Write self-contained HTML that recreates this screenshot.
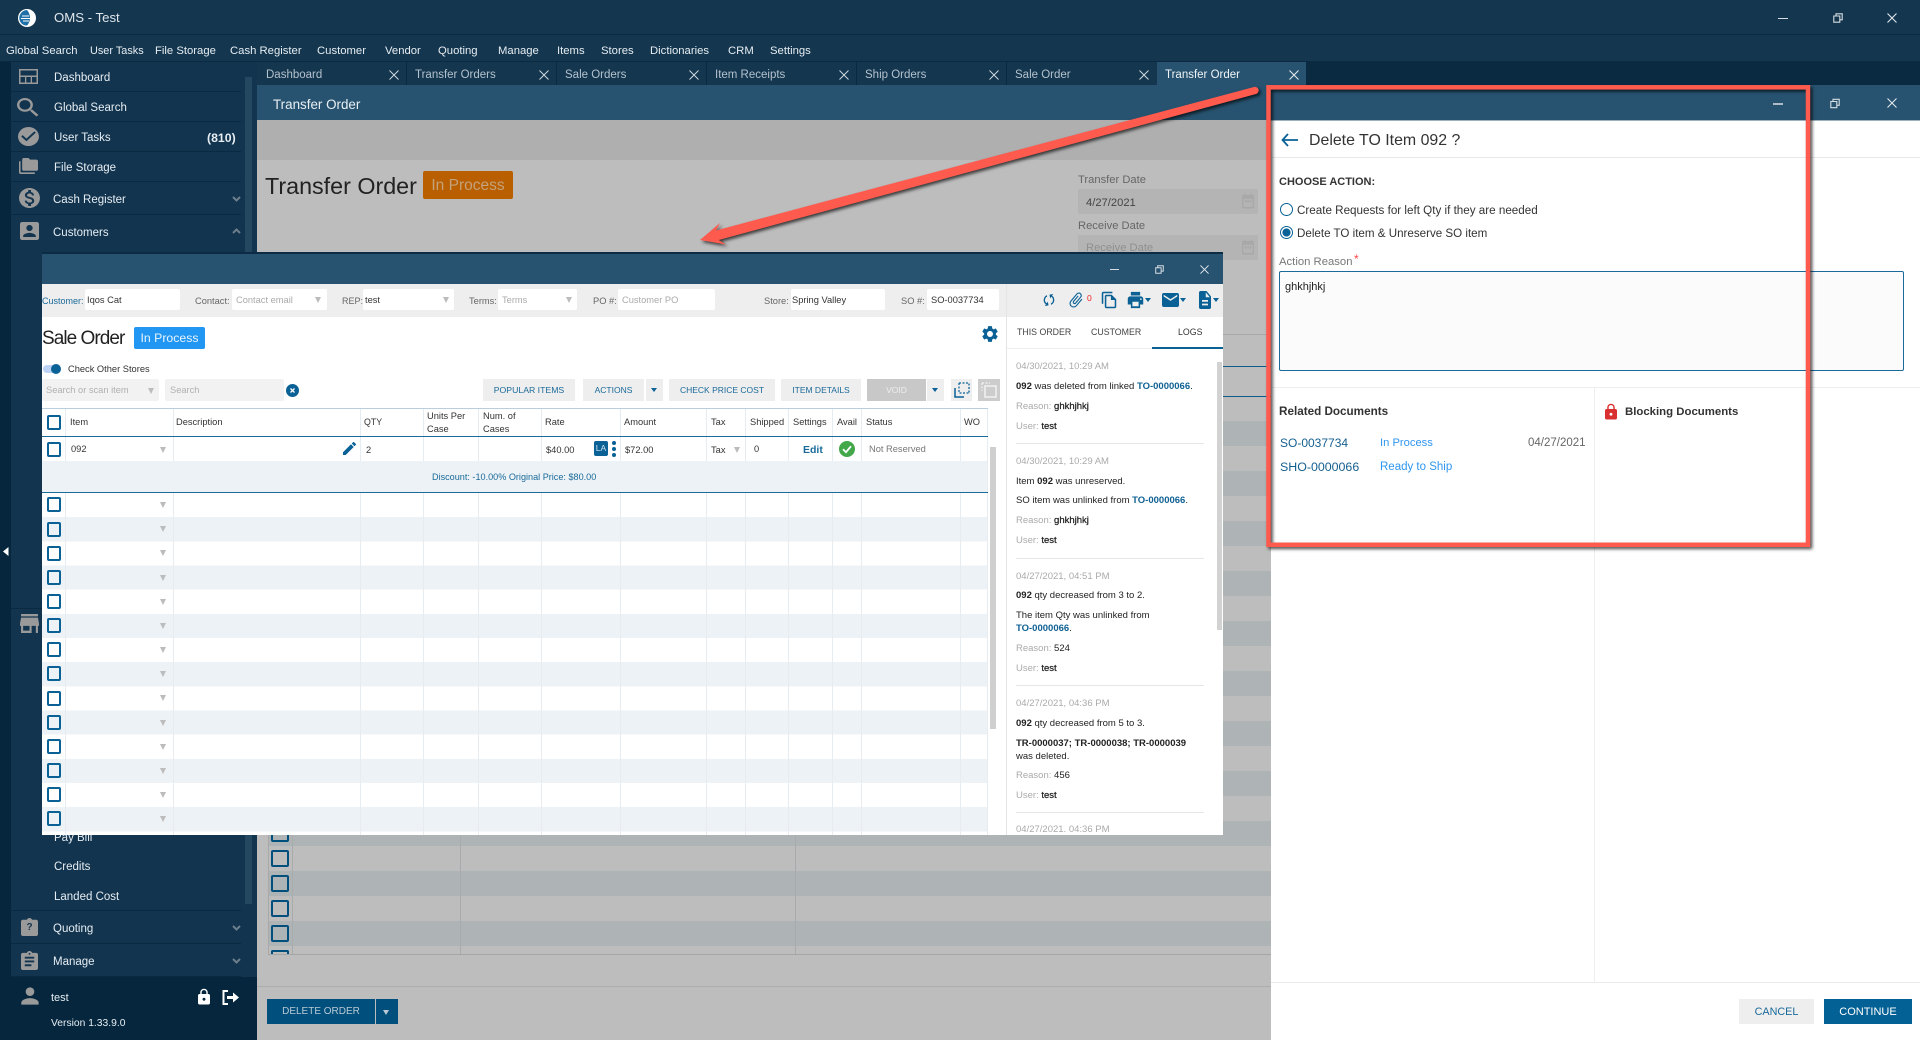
<!DOCTYPE html>
<html><head><meta charset="utf-8"><title>OMS - Test</title>
<style>
html,body{margin:0;padding:0;background:#bdbdbd}
#app{position:relative;width:1920px;height:1040px;overflow:hidden;font-family:"Liberation Sans",sans-serif;font-size:9.3px;color:#333}
.a,.b,.t,.s,.f{position:absolute;white-space:nowrap}
.t{line-height:14px}
.b{display:block}
.m{font-size:11.3px;color:#e6edf2;top:45px}
.s{font-size:11.5px;color:#e6edf2;line-height:14px;left:54px;margin-top:1px}
.sep{position:absolute;left:11px;width:230px;height:1px;background:#0a2a42}
.tab{position:absolute;top:68px;font-size:11.5px;color:#b4c2cd;line-height:14px;white-space:nowrap}
.ts{position:absolute;top:62px;height:23px;width:1px;background:#0a2a42}
.lb{position:absolute;top:294px;font-size:9.3px;color:#666;line-height:14px;white-space:nowrap}
.in{position:absolute;top:289px;height:21px;background:#fff;border-radius:2px;font-size:9.3px;line-height:23px;padding-left:2px;box-sizing:border-box;color:#333;white-space:nowrap}
.ph{color:#aaa;padding-left:4px}
.ar{position:absolute;width:0;height:0;border-left:3.5px solid transparent;border-right:3.5px solid transparent;border-top:6px solid #bcbcbc}
.bt{position:absolute;top:379px;height:22px;background:#eee;color:#1a6a9a;font-size:8.5px;line-height:22px;text-align:center;white-space:nowrap}
.cs{position:absolute;top:408px;width:1px;height:427px;background:#e6ecf0}
.h{position:absolute;font-size:9.3px;color:#333;line-height:12.5px;white-space:nowrap}
.c{position:absolute;left:47px;width:14px;height:15px;box-sizing:border-box;border:2px solid #0a6196;border-radius:2px}
.bc{position:absolute;left:271px;width:17.5px;height:17px;box-sizing:border-box;border:2.5px solid #014f7d;border-radius:2px}
.l{position:absolute;left:1016px;font-size:9.5px;line-height:13px;color:#222;white-space:nowrap}
.d{color:#aaa}
.k{color:#0f6194;font-weight:bold}
.v{-webkit-text-stroke:.25px #222}
.ls{position:absolute;left:1016px;width:188px;height:1px;background:#e6e6e6}
svg{position:absolute;display:block}
.g{fill:#9a9a9a}
.n{fill:#0a6196}
</style></head><body>
<div id="app">
<svg width="0" height="0" style="left:0;top:0"><defs>
<symbol id="x" viewBox="0 0 10 10"><path d="M.5.5l9 9M9.5.5l-9 9" stroke="#cfd8de" stroke-width="1" fill="none"/></symbol>
<symbol id="ex" viewBox="0 0 10 10"><path d="M.5.5l9 9M9.5.5l-9 9" stroke="#e2e8ec" stroke-width="1.1" fill="none"/></symbol>
<symbol id="rs" viewBox="0 0 10 10"><path d="M.8 3h6v6.2h-6zM3 3V.8h6.2v6H6.8" stroke="#d5dde2" stroke-width="1.1" fill="none"/></symbol>
<symbol id="assign" viewBox="0 0 24 24"><path d="M19 3h-4.18C14.4 1.84 13.3 1 12 1c-1.3 0-2.4.84-2.82 2H5c-1.1 0-2 .9-2 2v14c0 1.1.9 2 2 2h14c1.1 0 2-.9 2-2V5c0-1.1-.9-2-2-2zm-7 0c.55 0 1 .45 1 1s-.45 1-1 1-1-.45-1-1 .45-1 1-1zm2 14H7v-2h7v2zm3-4H7v-2h10v2zm0-4H7V7h10v2z"/></symbol>
<symbol id="cal" viewBox="0 0 24 24"><path d="M19 4h-1V2h-2v2H8V2H6v2H5a2 2 0 0 0-2 2v14a2 2 0 0 0 2 2h14a2 2 0 0 0 2-2V6a2 2 0 0 0-2-2zm0 16H5V9h14zM7 11h3v3H7zm4 0h3v3h-3zm4 0h2v3h-2z"/></symbol>
</defs></svg>

<!-- top bars -->
<div class="a" style="left:0;top:0;width:1920px;height:62px;background:#14364f"></div>
<div class="a" style="left:0;top:34px;width:1920px;height:1px;background:#0b2a42"></div>
<div class="a" style="left:0;top:61px;width:1920px;height:1px;background:#0b2a42"></div>
<svg style="left:18px;top:9px" width="18" height="18" viewBox="0 0 18 18"><circle cx="9" cy="9" r="9" fill="#fff"/><path d="M9 1a8 8 0 0 0-5 14c1 .8 3 1.6 5 1.5 2-2 3-5 3-7.500S11 3 9 1z" fill="#1d6fa8"/><path d="M4 7h7M3 9.500h9M5 12h6" stroke="#fff" stroke-width="1"/></svg>
<div class="t" style="left:54px;top:11px;font-size:13.2px;color:#dfe6eb">OMS - Test</div>
<div class="a" style="left:1778px;top:18px;width:10px;height:1px;background:#d5dde2"></div>
<svg style="left:1833px;top:13px" width="10" height="10"><use href="#rs"/></svg>
<svg style="left:1887px;top:13px" width="10" height="10"><use href="#ex"/></svg>
<div class="a m" style="left:6px">Global Search</div>
<div class="a m" style="left:90px;font-size:10.9px">User Tasks</div>
<div class="a m" style="left:155px">File Storage</div>
<div class="a m" style="left:230px">Cash Register</div>
<div class="a m" style="left:317px">Customer</div>
<div class="a m" style="left:385px">Vendor</div>
<div class="a m" style="left:438px">Quoting</div>
<div class="a m" style="left:498px">Manage</div>
<div class="a m" style="left:557px">Items</div>
<div class="a m" style="left:601px">Stores</div>
<div class="a m" style="left:650px">Dictionaries</div>
<div class="a m" style="left:728px">CRM</div>
<div class="a m" style="left:770px">Settings</div>

<!-- tab row -->
<div class="a" style="left:257px;top:62px;width:1663px;height:24px;background:#0a2a42"></div>
<div class="a" style="left:257px;top:62px;width:900px;height:23px;background:#14364f"></div>
<div class="a" style="left:1157px;top:62px;width:149px;height:23px;background:#275370"></div>
<div class="tab" style="left:266px">Dashboard</div><svg style="left:389px;top:70px" width="10" height="10"><use href="#x"/></svg><div class="ts" style="left:406px"></div>
<div class="tab" style="left:415px">Transfer Orders</div><svg style="left:539px;top:70px" width="10" height="10"><use href="#x"/></svg><div class="ts" style="left:556px"></div>
<div class="tab" style="left:565px">Sale Orders</div><svg style="left:689px;top:70px" width="10" height="10"><use href="#x"/></svg><div class="ts" style="left:706px"></div>
<div class="tab" style="left:715px">Item Receipts</div><svg style="left:839px;top:70px" width="10" height="10"><use href="#x"/></svg><div class="ts" style="left:856px"></div>
<div class="tab" style="left:865px">Ship Orders</div><svg style="left:989px;top:70px" width="10" height="10"><use href="#x"/></svg><div class="ts" style="left:1006px"></div>
<div class="tab" style="left:1015px">Sale Order</div><svg style="left:1139px;top:70px" width="10" height="10"><use href="#x"/></svg>
<div class="tab" style="left:1165px;color:#f0f4f6">Transfer Order</div><svg style="left:1289px;top:70px" width="10" height="10"><use href="#ex"/></svg>

<!-- sidebar -->
<div class="a" style="left:0;top:62px;width:11px;height:978px;background:#06263d"></div>
<div class="a" style="left:11px;top:62px;width:246px;height:915px;background:#12344f"></div>
<div class="a" style="left:245px;top:77px;width:7px;height:827px;background:#24485f"></div>
<div class="sep" style="top:91px"></div><div class="sep" style="top:121px"></div><div class="sep" style="top:151px"></div><div class="sep" style="top:181px"></div><div class="sep" style="top:214px"></div><div class="sep" style="top:910px"></div><div class="sep" style="top:943px"></div><div class="sep" style="top:976px"></div><div class="sep" style="top:608px;width:31px"></div>
<div class="s" style="top:70px">Dashboard</div>
<div class="s" style="top:100px">Global Search</div>
<div class="s" style="top:130px">User Tasks</div>
<div class="s" style="top:160px">File Storage</div>
<div class="s" style="top:192px;left:53px">Cash Register</div>
<div class="s" style="top:225px;left:53px">Customers</div>
<div class="s" style="top:130px;left:207px;font-weight:bold;font-size:12.3px">(810)</div>
<div class="s" style="top:830px">Pay Bill</div>
<div class="s" style="top:859px">Credits</div>
<div class="s" style="top:889px">Landed Cost</div>
<div class="s" style="top:921px;left:53px">Quoting</div>
<div class="s" style="top:954px;left:53px">Manage</div>
<svg style="left:19px;top:69px" width="19" height="15" viewBox="0 0 19 15"><path class="g" fill-rule="evenodd" d="M0 0h19v15H0zM1.500 1.500v5h16v-5zM1.500 8v5.500h4.500V8zM7.300 8v5.500h4.400V8zM13 8v5.500h4.500V8z"/></svg>
<svg style="left:17px;top:98px" width="22" height="19" viewBox="3 3 18 18" preserveAspectRatio="none"><path class="g" d="M15.500 14h-.79l-.28-.27A6.470 6.470 0 0 0 16 9.500 6.500 6.500 0 1 0 9.500 16c1.610 0 3.090-.59 4.230-1.570l.27.28v.79l5 4.990L20.490 19l-4.990-5zm-6 0C7.010 14 5 11.990 5 9.500S7.010 5 9.500 5 14 7.010 14 9.500 11.990 14 9.500 14z"/></svg>
<svg style="left:17px;top:126px" width="23" height="21" viewBox="1 1 22 22" preserveAspectRatio="none"><path class="g" d="M12 2C6.480 2 2 6.480 2 12s4.480 10 10 10 10-4.480 10-10S17.520 2 12 2zm-2 15l-5-5 1.410-1.410L10 14.170l7.590-7.590L19 8l-9 9z"/></svg>
<svg style="left:19px;top:158px" width="19" height="16" viewBox="0 2 24 20" preserveAspectRatio="none"><path class="g" d="M2 6H0v5h.01L0 20c0 1.100.9 2 2 2h18v-2H2V6zm20-2h-8l-2-2H6c-1.100 0-1.990.9-1.990 2L4 16c0 1.100.9 2 2 2h16c1.100 0 2-.9 2-2V6c0-1.100-.9-2-2-2z"/></svg>
<svg style="left:18px;top:187px" width="23" height="22" viewBox="1 1 22 22" preserveAspectRatio="none"><path class="g" d="M12 2C6.480 2 2 6.480 2 12s4.480 10 10 10 10-4.480 10-10S17.520 2 12 2zm1.410 16.090V20h-2.670v-1.930c-1.710-.36-3.160-1.460-3.270-3.400h1.960c.1 1.050.82 1.870 2.650 1.870 1.960 0 2.400-.98 2.400-1.590 0-.83-.44-1.610-2.670-2.140-2.480-.6-4.180-1.620-4.180-3.670 0-1.720 1.390-2.840 3.110-3.210V4h2.670v1.950c1.860.45 2.790 1.860 2.850 3.390H14.300c-.05-1.110-.64-1.870-2.220-1.870-1.500 0-2.400.68-2.400 1.640 0 .84.65 1.390 2.670 1.910s4.180 1.390 4.180 3.910c-.01 1.830-1.380 2.830-3.120 3.160z"/></svg>
<svg style="left:20px;top:222px" width="19" height="18" viewBox="3 3 18 18" preserveAspectRatio="none"><path class="g" d="M3 5v14c0 1.100.89 2 2 2h14c1.100 0 2-.9 2-2V5c0-1.100-.9-2-2-2H5c-1.110 0-2 .9-2 2zm12 4c0 1.660-1.340 3-3 3s-3-1.340-3-3 1.340-3 3-3 3 1.340 3 3zm-9 8c0-2 4-3.100 6-3.100s6 1.100 6 3.100v1H6v-1z"/></svg>
<svg style="left:232px;top:196px" width="9" height="6"><path d="M1 1l3.500 3.500L8 1" stroke="#6d7f8c" stroke-width="2" fill="none"/></svg>
<svg style="left:232px;top:228px" width="9" height="6"><path d="M1 5l3.500-3.500L8 5" stroke="#6d7f8c" stroke-width="2" fill="none"/></svg>
<svg style="left:232px;top:925px" width="9" height="6"><path d="M1 1l3.500 3.500L8 1" stroke="#6d7f8c" stroke-width="2" fill="none"/></svg>
<svg style="left:232px;top:958px" width="9" height="6"><path d="M1 1l3.500 3.500L8 1" stroke="#6d7f8c" stroke-width="2" fill="none"/></svg>
<svg style="left:20px;top:614px" width="19" height="19" viewBox="3 4 18 16" preserveAspectRatio="none"><path class="g" d="M20 4H4v2h16V4zm1 10v-2l-1-5H4l-1 5v2h1v6h10v-6h4v6h2v-6h1zm-9 4H6v-4h6v4z"/></svg>
<svg style="left:21px;top:918px" width="17" height="18" viewBox="3 1 18 20" preserveAspectRatio="none"><path class="g" d="M19 3h-4.180C14.400 1.840 13.300 1 12 1c-1.300 0-2.400.84-2.820 2H5c-1.100 0-2 .9-2 2v14c0 1.100.9 2 2 2h14c1.100 0 2-.9 2-2V5c0-1.100-.9-2-2-2z"/></svg>
<div class="t" style="left:26.500px;top:921px;font-size:10px;font-weight:bold;color:#12344f">?</div>
<svg style="left:21px;top:951px;fill:#9a9a9a" width="17" height="19" viewBox="3 1 18 20" preserveAspectRatio="none"><use href="#assign" width="24" height="24"/></svg>
<svg style="left:3px;top:547px" width="6" height="9"><path d="M5.500 0v9L0 4.500z" fill="#fff"/></svg>

<!-- sidebar footer -->
<div class="a" style="left:0;top:977px;width:257px;height:63px;background:#06263d"></div>
<svg style="left:17px;top:983px" width="26" height="26" viewBox="0 0 24 24"><path class="g" d="M12 12c2.210 0 4-1.790 4-4s-1.790-4-4-4-4 1.790-4 4 1.790 4 4 4zm0 2c-2.670 0-8 1.340-8 4v2h16v-2c0-2.660-5.330-4-8-4z"/></svg>
<div class="t" style="left:51px;top:991px;font-size:11px;color:#e6edf2">test</div>
<div class="t" style="left:51px;top:1016px;font-size:10.300px;margin-top:1px;color:#e6edf2">Version 1.33.9.0</div>
<svg style="left:195px;top:988px" width="18" height="18" viewBox="0 0 24 24"><path fill="#fff" d="M18 8h-1V6c0-2.760-2.240-5-5-5S7 3.240 7 6v2H6c-1.100 0-2 .9-2 2v10c0 1.100.9 2 2 2h12c1.100 0 2-.9 2-2V10c0-1.100-.9-2-2-2zm-6 9c-1.100 0-2-.9-2-2s.9-2 2-2 2 .9 2 2-.9 2-2 2zm3.100-9H8.900V6c0-1.710 1.390-3.100 3.100-3.100 1.710 0 3.100 1.390 3.100 3.100v2z"/></svg>
<svg style="left:222px;top:990px" width="17" height="15" viewBox="0 0 17 15"><path d="M6 1H1.500v13H6" stroke="#fff" stroke-width="2" fill="none"/><path d="M5 6h6V2.500l6 5-6 5V9H5z" fill="#fff"/></svg>

<!-- main content (dimmed) -->
<div class="a" style="left:257px;top:85px;width:1663px;height:35px;background:#275370"></div>
<div class="t" style="left:273px;top:97.500px;font-size:13.400px;color:#e9eff3">Transfer Order</div>
<div class="a" style="left:257px;top:120px;width:1014px;height:920px;background:#bdbdbd"></div>
<div class="a" style="left:257px;top:120px;width:1014px;height:40px;background:#afafaf"></div>
<div class="t" style="left:265px;top:176px;font-size:23.300px;line-height:20px;color:#222">Transfer Order</div>
<div class="a" style="left:423px;top:171px;width:90px;height:28px;background:#b95f00;border-radius:2px;color:#c4a27a;font-size:15.500px;line-height:29.500px;text-align:center">In Process</div>
<div class="t" style="left:1078px;top:173px;font-size:11.200px;color:#666">Transfer Date</div>
<div class="a" style="left:1078px;top:189px;width:180px;height:25px;background:#b4b4b4;border-radius:2px"></div>
<div class="t" style="left:1086px;top:195.500px;font-size:11.200px;color:#444">4/27/2021</div>
<svg style="left:1240px;top:192px;fill:#a8a8a8" width="16" height="18" viewBox="0 0 24 24" preserveAspectRatio="none"><use href="#cal" width="24" height="24"/></svg>
<div class="t" style="left:1078px;top:219px;font-size:11.200px;color:#666">Receive Date</div>
<div class="a" style="left:1078px;top:235px;width:180px;height:25px;background:#b4b4b4;border-radius:2px"></div>
<div class="t" style="left:1086px;top:241px;font-size:11.200px;color:#8f8f8f">Receive Date</div>
<svg style="left:1240px;top:238px;fill:#a8a8a8" width="16" height="18" viewBox="0 0 24 24" preserveAspectRatio="none"><use href="#cal" width="24" height="24"/></svg>
<!-- back grid -->
<div class="a" style="left:257px;top:334px;width:1014px;height:1px;background:#a8a8a8"></div>
<div class="a" style="left:268px;top:366px;width:1003px;height:1px;background:#0f5b8c"></div>
<div class="a" style="left:268px;top:396px;width:1003px;height:1px;background:#0f5b8c"></div>
<div class="a" style="left:268px;top:421px;width:1003px;height:533px;background:repeating-linear-gradient(#aeb3b5 0,#aeb3b5 25px,#bdbdbd 25px,#bdbdbd 50px)"></div>
<div class="a" style="left:268px;top:954px;width:1003px;height:1px;background:#a5a5a5"></div>
<div class="a" style="left:268px;top:397px;width:1px;height:557px;background:#a8a8a8"></div>
<div class="a" style="left:292px;top:397px;width:1px;height:557px;background:#a8abac"></div>
<div class="a" style="left:460px;top:397px;width:1px;height:557px;background:#a8abac"></div>
<div class="a" style="left:795px;top:397px;width:1px;height:557px;background:#a8abac"></div>
<div class="bc" style="top:825px"></div><div class="bc" style="top:850px"></div><div class="bc" style="top:875px"></div><div class="bc" style="top:900px"></div><div class="bc" style="top:925px"></div>
<div class="bc" style="top:950px;height:4px;border-bottom:0;border-radius:2px 2px 0 0"></div>
<div class="a" style="left:257px;top:986px;width:1014px;height:1px;background:#adadad"></div>
<div class="a" style="left:267px;top:999px;width:108px;height:25px;background:#004f7c;color:#b9cad5;font-size:10px;line-height:26.500px;text-align:center">DELETE ORDER</div>
<div class="a" style="left:376px;top:999px;width:22px;height:25px;background:#004f7c"></div>
<div class="ar" style="left:383px;top:1010px;border-top:5px solid #b9cad5"></div>

<!-- sale order window -->
<div class="a" style="left:42px;top:252px;width:1181px;height:583px;background:#fff"></div>
<div class="a" style="left:42px;top:252px;width:1181px;height:2px;background:#0c2c45"></div>
<div class="a" style="left:42px;top:254px;width:1181px;height:30px;background:#275370"></div>
<div class="a" style="left:1110px;top:269px;width:9px;height:1px;background:#d5dde2"></div>
<svg style="left:1155px;top:265px" width="9" height="9"><use href="#rs"/></svg>
<svg style="left:1200px;top:265px" width="9" height="9"><use href="#ex"/></svg>
<div class="a" style="left:42px;top:284px;width:1181px;height:33px;background:#eee"></div>
<div class="a" style="left:1006px;top:284px;width:1px;height:551px;background:#e4e4e4"></div>
<div class="lb" style="left:42px;color:#1a6a9a;font-size:9px">Customer:</div>
<div class="in" style="left:85px;width:95px">Iqos Cat</div>
<div class="lb" style="left:195px">Contact:</div>
<div class="in ph" style="left:232px;width:95px">Contact email</div><div class="ar" style="left:315px;top:297px"></div>
<div class="lb" style="left:342px;font-size:9px">REP:</div>
<div class="in" style="left:363px;width:91px">test</div><div class="ar" style="left:443px;top:297px"></div>
<div class="lb" style="left:469px">Terms:</div>
<div class="in ph" style="left:498px;width:79px">Terms</div><div class="ar" style="left:566px;top:297px"></div>
<div class="lb" style="left:593px">PO #:</div>
<div class="in ph" style="left:618px;width:97px">Customer PO</div>
<div class="lb" style="left:764px">Store:</div>
<div class="in" style="left:791px;width:94px;padding-left:1px">Spring Valley</div>
<div class="lb" style="left:901px">SO #:</div>
<div class="in" style="left:927px;width:72px;padding-left:4px">SO-0037734</div>
<!-- toolbar icons -->
<svg style="left:1041px;top:292px" width="16" height="16" viewBox="0 0 24 24"><path class="n" transform="rotate(35 12 12)" d="M12 4V1L8 5l4 4V6c3.310 0 6 2.690 6 6 0 1.010-.25 1.970-.7 2.800l1.460 1.460A7.930 7.930 0 0 0 20 12c0-4.420-3.580-8-8-8zm0 14c-3.310 0-6-2.690-6-6 0-1.010.25-1.970.7-2.800L5.240 7.740A7.930 7.930 0 0 0 4 12c0 4.420 3.580 8 8 8v3l4-4-4-4v3z"/></svg>
<svg style="left:1067px;top:291px" width="18" height="18" viewBox="0 0 24 24"><path class="n" transform="rotate(40 12 12)" d="M16.500 6v11.500c0 2.210-1.790 4-4 4s-4-1.790-4-4V5c0-1.380 1.120-2.500 2.500-2.500s2.500 1.120 2.500 2.500v10.500c0 .55-.45 1-1 1s-1-.45-1-1V6H10v9.500c0 1.380 1.120 2.500 2.500 2.500s2.500-1.120 2.500-2.500V5c0-2.210-1.790-4-4-4S7 2.790 7 5v12.500c0 3.040 2.460 5.500 5.500 5.500s5.500-2.460 5.500-5.500V6h-1.500z"/></svg>
<div class="t" style="left:1087px;top:291px;font-size:8.500px;color:#e22">0</div>
<svg style="left:1101px;top:291px" width="16" height="18" viewBox="1 0 21 24" preserveAspectRatio="none"><path class="n" d="M16 1H4c-1.100 0-2 .9-2 2v14h2V3h12V1zm-1 4H8c-1.100 0-1.990.9-1.990 2L6 21c0 1.100.89 2 1.990 2H19c1.100 0 2-.9 2-2V11l-6-6zM8 21V7h6v5h5v9H8z"/></svg>
<svg style="left:1127px;top:291px" width="17" height="18" viewBox="1 2 22 20" preserveAspectRatio="none"><path class="n" d="M19 8H5c-1.660 0-3 1.340-3 3v6h4v4h12v-4h4v-6c0-1.660-1.340-3-3-3zm-3 11H8v-5h8v5zm3-7c-.55 0-1-.45-1-1s.45-1 1-1 1 .45 1 1-.45 1-1 1zm-1-9H6v4h12V3z"/></svg>
<div class="ar" style="left:1145px;top:298px;border-top:4px solid #0a6196"></div>
<svg style="left:1162px;top:293px" width="17" height="14" viewBox="2 4 20 16" preserveAspectRatio="none"><path class="n" d="M20 4H4c-1.100 0-1.990.9-1.990 2L2 18c0 1.100.9 2 2 2h16c1.100 0 2-.9 2-2V6c0-1.100-.9-2-2-2zm0 4l-8 5-8-5V6l8 5 8-5v2z"/></svg>
<div class="ar" style="left:1180px;top:298px;border-top:4px solid #0a6196"></div>
<svg style="left:1199px;top:291px" width="12" height="18" viewBox="4 2 16 20" preserveAspectRatio="none"><path class="n" d="M14 2H6c-1.100 0-1.990.9-1.990 2L4 20c0 1.100.89 2 1.990 2H18c1.100 0 2-.9 2-2V8l-6-6zm2 16H8v-2h8v2zm0-4H8v-2h8v2zm-3-5V3.500L18.500 9H13z"/></svg>
<div class="ar" style="left:1213px;top:298px;border-top:4px solid #0a6196"></div>
<!-- title -->
<div class="t" style="left:42px;top:329px;font-size:19px;line-height:20px;letter-spacing:-.95px;color:#222">Sale Order</div>
<div class="a" style="left:134px;top:327px;width:71px;height:22px;background:#2196f3;border-radius:2px;color:#eaf5fe;font-size:12.300px;line-height:23px;text-align:center">In Process</div>
<svg style="left:981px;top:325px" width="18" height="18" viewBox="1 1 22 22"><path class="n" d="M19.140 12.940c.04-.3.06-.61.06-.94 0-.32-.02-.64-.07-.94l2.030-1.580c.18-.14.23-.41.12-.61l-1.920-3.320c-.12-.22-.37-.29-.59-.22l-2.390.96c-.5-.38-1.030-.7-1.620-.94l-.36-2.540c-.04-.24-.24-.41-.48-.41h-3.840c-.24 0-.43.17-.47.41l-.36 2.540c-.59.24-1.130.57-1.620.94l-2.390-.96c-.22-.08-.47 0-.59.22L2.740 8.870c-.12.21-.08.47.12.61l2.030 1.580c-.05.3-.09.63-.09.94s.02.64.07.94l-2.030 1.580c-.18.14-.23.41-.12.61l1.920 3.320c.12.22.37.29.59.22l2.390-.96c.5.38 1.030.7 1.620.94l.36 2.540c.05.24.24.41.48.41h3.840c.24 0 .44-.17.47-.41l.36-2.540c.59-.24 1.130-.56 1.620-.94l2.390.96c.22.08.47 0 .59-.22l1.920-3.320c.12-.22.07-.47-.12-.61l-2.010-1.580zM12 15.600c-1.980 0-3.600-1.620-3.600-3.600s1.620-3.600 3.600-3.600 3.600 1.620 3.600 3.600-1.620 3.600-3.600 3.600z"/></svg>
<!-- controls -->
<div class="a" style="left:43px;top:365px;width:16px;height:8px;background:#bcd3f5;border-radius:4px"></div>
<div class="a" style="left:51px;top:364px;width:10px;height:10px;background:#0a6196;border-radius:50%"></div>
<div class="t" style="left:68px;top:362px;color:#333;font-size:9.300px">Check Other Stores</div>
<div class="a" style="left:42px;top:379px;width:117px;height:22px;background:#f2f2f2;border-radius:2px;line-height:22px;color:#b0b0b0;font-size:9.300px;padding-left:4px;box-sizing:border-box">Search or scan item</div><div class="ar" style="left:148px;top:388px"></div>
<div class="a" style="left:165px;top:379px;width:119px;height:22px;background:#f2f2f2;border-radius:2px;line-height:22px;color:#b0b0b0;font-size:9.300px;padding-left:5px;box-sizing:border-box">Search</div>
<svg style="left:286px;top:384px" width="13" height="13"><circle cx="6.500" cy="6.500" r="6.500" fill="#0a6196"/><path d="M4.500 4.500l4 4M8.500 4.500l-4 4" stroke="#fff" stroke-width="1.300"/></svg>
<div class="bt" style="left:483px;width:92px;font-size:8.700px">POPULAR ITEMS</div>
<div class="bt" style="left:583px;width:61px">ACTIONS</div>
<div class="bt" style="left:646px;width:17px"></div><div class="ar" style="left:651px;top:388px;border-top:4px solid #0a6196"></div>
<div class="bt" style="left:669px;width:106px">CHECK PRICE COST</div>
<div class="bt" style="left:781px;width:80px">ITEM DETAILS</div>
<div class="bt" style="left:867px;width:59px;background:#c8c8c8;color:#eee">VOID</div>
<div class="bt" style="left:927px;width:17px"></div><div class="ar" style="left:932px;top:388px;border-top:4px solid #0a6196"></div>
<div class="bt" style="left:951px;width:21px"></div>
<svg style="left:954px;top:382px" width="16" height="16"><path d="M5 1h10v10" stroke="#0a6196" stroke-width="1.300" stroke-dasharray="2 1.500" fill="none"/><path d="M1 6v9h9" stroke="#0a6196" stroke-width="1.500" fill="none"/><path d="M5 1v10h10" stroke="#0a6196" stroke-width="1.200" stroke-dasharray="2 1.500" fill="none"/></svg>
<div class="bt" style="left:978px;width:22px;background:#ccc"></div>
<svg style="left:981px;top:382px" width="16" height="16"><path d="M4 4h11v11H4z" stroke="#f2f2f2" stroke-width="1.500" fill="none"/><path d="M1 1h8M1 1v8" stroke="#f2f2f2" stroke-width="1.300" stroke-dasharray="2 1.500" fill="none"/></svg>

<!-- table -->
<div class="a" style="left:42px;top:493px;width:945px;height:342px;background:repeating-linear-gradient(#fff 0,#fff 24.170px,#ecf2f6 24.170px,#ecf2f6 48.340px)"></div>
<div class="cs" style="left:65px"></div><div class="cs" style="left:173px"></div><div class="cs" style="left:360px"></div><div class="cs" style="left:423px"></div><div class="cs" style="left:478px"></div><div class="cs" style="left:541px"></div><div class="cs" style="left:620px"></div><div class="cs" style="left:706px"></div><div class="cs" style="left:745px"></div><div class="cs" style="left:788px"></div><div class="cs" style="left:832px"></div><div class="cs" style="left:861px"></div><div class="cs" style="left:960px"></div><div class="cs" style="left:987px"></div>
<div class="a" style="left:42px;top:408px;width:946px;height:1px;background:#b9cfe0"></div>
<div class="a" style="left:42px;top:436px;width:946px;height:1px;background:#1a6a9a"></div>
<div class="a" style="left:42px;top:461px;width:945px;height:31px;background:#ecf2f6"></div>
<div class="a" style="left:42px;top:492px;width:946px;height:1px;background:#1a6a9a"></div>
<div class="h" style="left:70px;top:416px">Item</div>
<div class="h" style="left:176px;top:416px">Description</div>
<div class="h" style="left:364px;top:416px;font-size:8.800px">QTY</div>
<div class="h" style="left:427px;top:410px;line-height:13px">Units Per<br>Case</div>
<div class="h" style="left:483px;top:410px;line-height:13px">Num. of<br>Cases</div>
<div class="h" style="left:545px;top:416px">Rate</div>
<div class="h" style="left:624px;top:416px">Amount</div>
<div class="h" style="left:711px;top:416px">Tax</div>
<div class="h" style="left:750px;top:416px">Shipped</div>
<div class="h" style="left:793px;top:416px">Settings</div>
<div class="h" style="left:837px;top:416px">Avail</div>
<div class="h" style="left:866px;top:416px">Status</div>
<div class="h" style="left:964px;top:416px">WO</div>
<div class="c" style="top:415px"></div>
<div class="c" style="top:442px"></div>
<div class="h" style="left:71px;top:443px">092</div><div class="ar" style="left:160px;top:447px"></div>
<svg style="left:343px;top:442px" width="13" height="13" viewBox="3 3 18 18"><path class="n" d="M3 17.250V21h3.750L17.810 9.940l-3.750-3.750L3 17.250zM20.710 7.040c.39-.39.39-1.020 0-1.410l-2.340-2.340c-.39-.39-1.020-.39-1.410 0l-1.830 1.830 3.750 3.750 1.830-1.830z"/></svg>
<div class="h" style="left:366px;top:444px">2</div>
<div class="h" style="left:546px;top:444px">$40.00</div>
<div class="a" style="left:594px;top:441px;width:14px;height:15px;background:#0a6196;border-radius:2px;color:#cfe3ef;font-size:8.500px;line-height:15px;text-align:center">LA</div>
<div class="a" style="left:612px;top:441px;width:4px;height:4px;background:#0a6196;border-radius:50%"></div><div class="a" style="left:612px;top:447px;width:4px;height:4px;background:#0a6196;border-radius:50%"></div><div class="a" style="left:612px;top:453px;width:4px;height:4px;background:#0a6196;border-radius:50%"></div>
<div class="h" style="left:625px;top:444px">$72.00</div>
<div class="h" style="left:711px;top:444px">Tax</div><div class="ar" style="left:734px;top:447px"></div>
<div class="h" style="left:754px;top:443px">0</div>
<div class="h" style="left:803px;top:443.500px;font-size:10.500px;font-weight:bold;color:#1a6a9a">Edit</div>
<svg style="left:839px;top:441px" width="16" height="16"><circle cx="8" cy="8" r="8" fill="#43a84a"/><path d="M4 8.200l3 3 5-6" stroke="#fff" stroke-width="1.800" fill="none"/></svg>
<div class="h" style="left:869px;top:443px;color:#777">Not Reserved</div>
<div class="h" style="left:432px;top:471px;font-size:9.100px;color:#1a6a9a">Discount: -10.00% Original Price: $80.00</div>
<!-- rows -->
<div class="c" style="top:497px"></div><div class="c" style="top:522px"></div><div class="c" style="top:546px"></div><div class="c" style="top:570px"></div><div class="c" style="top:594px"></div><div class="c" style="top:618px"></div><div class="c" style="top:642px"></div><div class="c" style="top:666px"></div><div class="c" style="top:691px"></div><div class="c" style="top:715px"></div><div class="c" style="top:739px"></div><div class="c" style="top:763px"></div><div class="c" style="top:787px"></div><div class="c" style="top:811px"></div>
<div class="ar" style="left:160px;top:502px"></div><div class="ar" style="left:160px;top:526px"></div><div class="ar" style="left:160px;top:550px"></div><div class="ar" style="left:160px;top:575px"></div><div class="ar" style="left:160px;top:599px"></div><div class="ar" style="left:160px;top:623px"></div><div class="ar" style="left:160px;top:647px"></div><div class="ar" style="left:160px;top:671px"></div><div class="ar" style="left:160px;top:695px"></div><div class="ar" style="left:160px;top:720px"></div><div class="ar" style="left:160px;top:744px"></div><div class="ar" style="left:160px;top:768px"></div><div class="ar" style="left:160px;top:792px"></div><div class="ar" style="left:160px;top:816px"></div>
<div class="a" style="left:990px;top:447px;width:6px;height:282px;background:#cfcfcf"></div>

<!-- right panel -->
<div class="a" style="left:1007px;top:317px;width:216px;height:518px;background:#fff"></div>
<div class="a" style="left:1007px;top:348px;width:216px;height:1px;background:#eee"></div>
<div class="t" style="left:1017px;top:325px;font-size:8.800px;color:#444">THIS ORDER</div>
<div class="t" style="left:1091px;top:325px;font-size:8.800px;color:#444">CUSTOMER</div>
<div class="t" style="left:1178px;top:325px;font-size:8.800px;color:#333">LOGS</div>
<div class="a" style="left:1152px;top:347px;width:71px;height:2px;background:#0a6196"></div>
<div class="a" style="left:1217px;top:362px;width:5px;height:268px;background:#d2d2d2"></div>
<div class="l d" style="top:360px">04/30/2021, 10:29 AM</div>
<div class="l" style="top:380px"><b>092</b> was deleted from linked <span class="k">TO-0000066</span>.</div>
<div class="l" style="top:400px"><span class="d">Reason:</span> <span class="v">ghkhjhkj</span></div>
<div class="l" style="top:420px"><span class="d">User:</span> <span class="v">test</span></div>
<div class="ls" style="top:443px"></div>
<div class="l d" style="top:455px">04/30/2021, 10:29 AM</div>
<div class="l" style="top:475px">Item <b>092</b> was unreserved.</div>
<div class="l" style="top:494px">SO item was unlinked from <span class="k">TO-0000066</span>.</div>
<div class="l" style="top:514px"><span class="d">Reason:</span> <span class="v">ghkhjhkj</span></div>
<div class="l" style="top:534px"><span class="d">User:</span> <span class="v">test</span></div>
<div class="ls" style="top:558px"></div>
<div class="l d" style="top:570px">04/27/2021, 04:51 PM</div>
<div class="l" style="top:589px"><b>092</b> qty decreased from 3 to 2.</div>
<div class="l" style="top:609px">The item Qty was unlinked from</div>
<div class="l" style="top:622px"><span class="k">TO-0000066</span>.</div>
<div class="l" style="top:642px"><span class="d">Reason:</span> 524</div>
<div class="l" style="top:662px"><span class="d">User:</span> <span class="v">test</span></div>
<div class="ls" style="top:685px"></div>
<div class="l d" style="top:697px">04/27/2021, 04:36 PM</div>
<div class="l" style="top:717px"><b>092</b> qty decreased from 5 to 3.</div>
<div class="l" style="top:737px"><b>TR-0000037; TR-0000038; TR-0000039</b></div>
<div class="l" style="top:750px">was deleted.</div>
<div class="l" style="top:769px"><span class="d">Reason:</span> 456</div>
<div class="l" style="top:789px"><span class="d">User:</span> <span class="v">test</span></div>
<div class="ls" style="top:812px"></div>
<div class="a" style="left:1007px;top:823px;width:216px;height:9px;overflow:hidden"><div class="l d" style="left:9px;top:0">04/27/2021, 04:36 PM</div></div>

<!-- dialog -->
<div class="a" style="left:1271px;top:86px;width:649px;height:34px;background:#275370"></div>
<div class="a" style="left:1271px;top:120px;width:649px;height:1px;background:#9fb0bb"></div>
<div class="a" style="left:1271px;top:121px;width:649px;height:919px;background:#fff"></div>
<div class="a" style="left:1773px;top:103px;width:10px;height:2px;background:#aebcc6"></div>
<svg style="left:1830px;top:98px" width="10" height="11"><use href="#rs"/></svg>
<svg style="left:1887px;top:98px" width="10" height="10"><use href="#ex"/></svg>
<div class="a" style="left:1271px;top:157px;width:649px;height:1px;background:#e8e8e8"></div>
<svg style="left:1281px;top:133px" width="18" height="14"><path d="M7 1L1.500 7 7 13M1.500 7H17" stroke="#0a6196" stroke-width="1.800" fill="none"/></svg>
<div class="t" style="left:1309px;top:134px;font-size:15.900px;color:#333">Delete TO Item 092 ?</div>
<div class="t" style="left:1279px;top:175px;font-size:11px;font-weight:bold;color:#333">CHOOSE ACTION:</div>
<div class="a" style="left:1280px;top:203px;width:13px;height:13px;box-sizing:border-box;border:1.500px solid #0a6196;border-radius:50%"></div>
<div class="t" style="left:1297px;top:203.500px;font-size:11.650px;color:#333">Create Requests for left Qty if they are needed</div>
<div class="a" style="left:1280px;top:226px;width:13px;height:13px;box-sizing:border-box;border:1.500px solid #0a6196;border-radius:50%;background:radial-gradient(circle,#0a6196 0,#0a6196 3.800px,#fff 4.300px)"></div>
<div class="t" style="left:1297px;top:226.500px;font-size:11.600px;color:#333">Delete TO item &amp; Unreserve SO item</div>
<div class="t" style="left:1279px;top:254.500px;font-size:11.300px;color:#777">Action Reason</div>
<div class="t" style="left:1354px;top:252px;font-size:12px;color:#f44">*</div>
<div class="a" style="left:1279px;top:271px;width:625px;height:100px;box-sizing:border-box;border:1px solid #1b6a9c;border-radius:2px;background:#fbfbfb"></div>
<div class="t" style="left:1285px;top:279.500px;font-size:11px;color:#222">ghkhjhkj</div>
<div class="a" style="left:1271px;top:387px;width:649px;height:1px;background:#eee"></div>
<div class="a" style="left:1594px;top:387px;width:1px;height:595px;background:#eee"></div>
<div class="t" style="left:1279px;top:405px;font-size:11.700px;font-weight:bold;color:#333">Related Documents</div>
<svg style="left:1602px;top:403px" width="18" height="18" viewBox="0 0 24 24"><path fill="#d9302f" d="M18 8h-1V6c0-2.760-2.240-5-5-5S7 3.240 7 6v2H6c-1.100 0-2 .9-2 2v10c0 1.100.9 2 2 2h12c1.100 0 2-.9 2-2V10c0-1.100-.9-2-2-2zm-6 9c-1.100 0-2-.9-2-2s.9-2 2-2 2 .9 2 2-.9 2-2 2zm3.100-9H8.900V6c0-1.710 1.390-3.100 3.100-3.100 1.710 0 3.100 1.390 3.100 3.100v2z"/></svg>
<div class="t" style="left:1625px;top:405px;font-size:11.400px;font-weight:bold;color:#333">Blocking Documents</div>
<div class="t" style="left:1280px;top:436px;font-size:12px;color:#155f8f">SO-0037734</div>
<div class="t" style="left:1380px;top:436px;font-size:11.200px;color:#2e96ef">In Process</div>
<div class="t" style="left:1528px;top:436px;font-size:11.500px;color:#666">04/27/2021</div>
<div class="t" style="left:1280px;top:460px;font-size:12.400px;color:#155f8f">SHO-0000066</div>
<div class="t" style="left:1380px;top:460px;font-size:11.500px;color:#2e96ef">Ready to Ship</div>
<div class="a" style="left:1271px;top:982px;width:649px;height:1px;background:#eaeaea"></div>
<div class="a" style="left:1739px;top:999px;width:75px;height:25px;background:#eee;color:#1a6a9a;font-size:10.800px;line-height:26.500px;text-align:center">CANCEL</div>
<div class="a" style="left:1824px;top:999px;width:88px;height:25px;background:#046195;color:#fff;font-size:11px;line-height:26.500px;text-align:center">CONTINUE</div>

<!-- annotations -->
<svg style="left:0;top:0;filter:drop-shadow(2px 2px 1.500px rgba(0,0,0,.7))" width="1920" height="1040"><path fill="#ff5a4e" d="M700 240L720 223 716 230.500 1254 87A3.500 3.500 0 0 1 1256 94L718.700 240 726 244.500Z"/><rect x="1268.500" y="87.300" width="539.500" height="457.500" fill="none" stroke="#ff5a4e" stroke-width="4.500"/></svg>
</div>
</body></html>
